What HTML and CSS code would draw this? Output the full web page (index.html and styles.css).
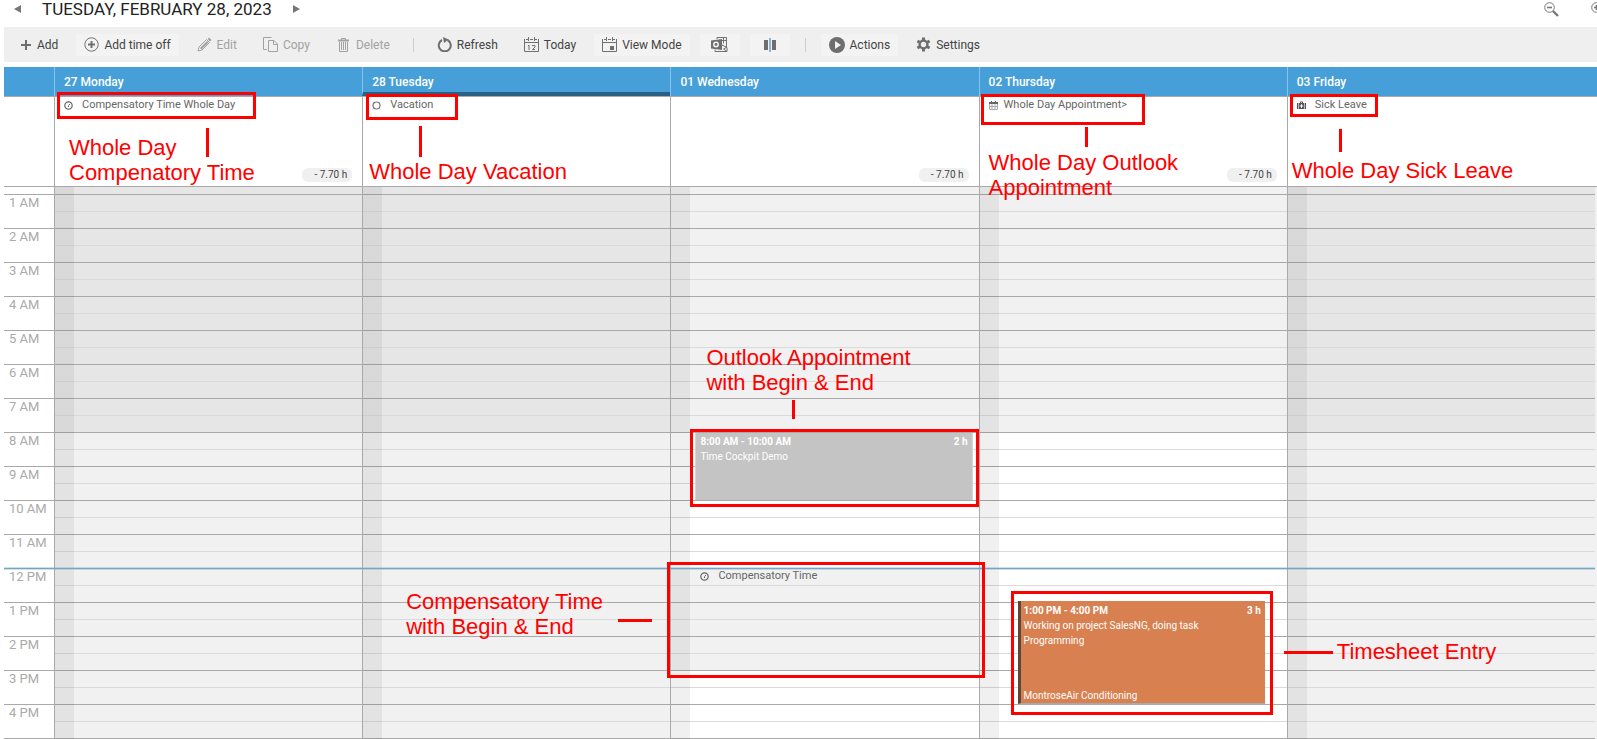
FILE: index.html
```html
<!DOCTYPE html>
<html lang="en">
<head>
<meta charset="utf-8">
<title>Timesheet Calendar</title>
<link rel="stylesheet" href="styles.css">
</head>
<body>
<header class="date-bar">
  <button class="date-arrow" aria-label="Previous week"><svg width="8" height="8" viewBox="0 0 8 8"><path d="M7 0v8L0 4z" fill="#777"/></svg></button>
  <h1 class="date-title">TUESDAY, FEBRUARY 28, 2023</h1>
  <button class="date-arrow" aria-label="Next week"><svg width="8" height="8" viewBox="0 0 8 8"><path d="M1 0v8l7-4z" fill="#777"/></svg></button>
  <div class="zoom-tools">
    <button class="zoom-button" aria-label="Zoom out"><svg width="15" height="15" viewBox="0 0 15 15" fill="none" stroke="#777"><circle cx="5.5" cy="5.5" r="4.8"/><path d="M3 5.500h5" stroke-width="1.600"/><path d="M9 9l5 5" stroke-width="2.400"/></svg></button>
    <button class="zoom-button" aria-label="Zoom in"><svg width="15" height="15" viewBox="0 0 15 15" fill="none" stroke="#777"><circle cx="5.500" cy="5.500" r="4.800"/><path d="M3 5.500h5M5.500 3v5" stroke-width="1.600"/><path d="M9 9l5 5" stroke-width="2.400"/></svg></button>
  </div>
</header>

<nav class="toolbar" aria-label="Calendar actions">
  <button class="tool"><svg width="12" height="12" viewBox="0 0 12 12"><path d="M6 1v10M1 6h10" stroke="#6e6e6e" stroke-width="2"/></svg>Add</button>
  <button class="tool raised"><svg width="15" height="15" viewBox="0 0 15 15" fill="none" stroke="#707070"><circle cx="7.500" cy="7.500" r="6.700"/><path d="M7.500 4v7M4 7.500h7" stroke-width="2"/></svg>Add time off</button>
  <button class="tool" disabled><svg width="15" height="15" viewBox="0 0 15 15"><path d="M1 14l1-4 7.500-7.500 3 3L5 13z" fill="#f0f0f0" stroke="#a2a2a2"/><path d="M3 11L10 4l1.500 1.500-7 7z" fill="#a2a2a2"/><path d="M10.500 2L12 .5l2.500 2.500L13 4.500z" fill="#a2a2a2"/></svg>Edit</button>
  <button class="tool" disabled><svg width="15" height="15" viewBox="0 0 15 15" fill="none" stroke="#a2a2a2"><path d="M4 12.500H.5v-12h8"/><path d="M5.500 3.500h5.500l3.500 3.500v7.500h-9z"/><path d="M10.500 3.500v4h4"/></svg>Copy</button>
  <button class="tool" disabled><svg width="15" height="15" viewBox="0 0 15 15" fill="none" stroke="#a2a2a2"><path d="M2 3.500h11" stroke-width="2"/><path d="M5.500 3V1.500h4V3M3.500 5v9.500h8V5M5.500 5v8M7.500 5v8M9.500 5v8"/></svg>Delete</button>
  <span class="separator"></span>
  <button class="tool"><svg width="15" height="15" viewBox="0 0 15 15"><path d="M10.500 3A6 6 0 1 1 5 3" fill="none" stroke="#6e6e6e" stroke-width="2"/><path d="M6 0l5.500 2.600L7 6z" fill="#6e6e6e"/></svg>Refresh</button>
  <button class="tool"><svg width="15" height="15" viewBox="0 0 15 15" fill="none" stroke="#707070"><path d="M.5 2v12.500h14V2M.5 5.500h14M2 2.500h2M6 2.500h3M11 2.500h2M4.500 0v4M10.500 0v4M5 8v5M4 8.500h1M8 8.500h3V10L8.500 12.500H11"/></svg>Today</button>
  <button class="tool raised"><svg width="15" height="15" viewBox="0 0 15 15" fill="none" stroke="#707070"><path d="M.5 2v12.500h14V2M.5 5.500h14M2 2.500h2M6 2.500h3M11 2.500h2M4.500 0v4M10.500 0v4"/><path d="M8 9h4v4H8z" fill="#6e6e6e" stroke="none"/></svg>View Mode</button>
  <button class="tool raised icon-only" aria-label="Outlook"><svg width="17" height="16" viewBox="0 0 17 16" fill="none" stroke="#707070"><path d="M6 2V.5h9.500V10M10.500 3.500h5M12.500.5v6"/><path d="M0 3.500l11-1.500v11L0 11.500z" fill="#6e6e6e" stroke="none"/><circle cx="5" cy="7.500" r="2.200" stroke="#f3f3f3" stroke-width="1.500"/><path d="M11 8l5 2.500v4H4V12.500M16 10l-3.500 2 3.500 2.500"/></svg></button>
  <button class="tool raised icon-only" aria-label="Columns"><svg width="12" height="14" viewBox="0 0 12 14"><path d="M0 2h4v10H0zM8 2h4v10H8z" fill="#6e6e6e"/><path d="M5 0h2v14H5z" fill="#86b5d9"/></svg></button>
  <span class="separator"></span>
  <button class="tool raised"><svg width="16" height="16" viewBox="0 0 16 16"><circle cx="8" cy="8" r="8" fill="#6e6e6e"/><path d="M6 4l6 4-6 4z" fill="#f3f3f3"/></svg>Actions</button>
  <button class="tool"><svg width="15" height="15" viewBox="0 0 15 15"><g stroke="#6e6e6e" fill="none"><circle cx="7.500" cy="7.500" r="3.900" stroke-width="2.400"/><path d="M7.500.5v2.500M7.500 12v2.500M1.400 4l2.300 1.300M11.300 9.700l2.300 1.300M1.400 11l2.300-1.300M11.300 5.300L13.600 4" stroke-width="3"/></g></svg>Settings</button>
</nav>

<main class="calendar">
  <div class="row heads">
    <div class="gutter"></div>
    <h2 class="head">27 Monday</h2>
    <h2 class="head today">28 Tuesday</h2>
    <h2 class="head">01 Wednesday</h2>
    <h2 class="head">02 Thursday</h2>
    <h2 class="head">03 Friday</h2>
  </div>

  <div class="row all-day">
    <div class="gutter"></div>
    <div class="cell">
      <p class="entry"><svg width="9" height="9" viewBox="0 0 9 9" fill="none" stroke="#666"><circle cx="4.500" cy="4.500" r="3.700" stroke-width="1.200"/><path d="M6 3L4.500 4.500V6"/></svg>Compensatory Time Whole Day</p>
      <span class="balance">- 7.70 h</span>
    </div>
    <div class="cell">
      <p class="entry"><svg width="9" height="9" viewBox="0 0 9 9"><circle cx="4.500" cy="4.500" r="3.500" fill="none" stroke="#777" stroke-width="1.200"/><path d="M.8.8l1 1M8.200.8l-1 1M.8 8.200l1-1M8.200 8.200l-1-1" stroke="#aaa"/></svg>Vacation</p>
    </div>
    <div class="cell">
      <span class="balance">- 7.70 h</span>
    </div>
    <div class="cell">
      <p class="entry near"><svg width="9" height="9" viewBox="0 0 9 9"><path d="M0 1h9v2H0zM2 0h1v2H2zM6 0h1v2H6z" fill="#666"/><path d="M.5 3v5.500h8V3M3 3v5.500M6 3v5.500M.5 5.500h8" stroke="#aaa" fill="none"/></svg>Whole Day Appointment&gt;</p>
      <span class="balance">- 7.70 h</span>
    </div>
    <div class="cell">
      <p class="entry"><svg width="9" height="9" viewBox="0 0 9 9"><path d="M0 2h1v6H0zM8 2h1v6H8zM1.600 2H3V.5h3V2h1.400v6H1.600zM4 1.300V2h1v-.7z" fill="#555"/><path d="M4.500 3.200v3.600M2.700 5h3.600" stroke="#fff"/></svg>Sick Leave</p>
    </div>
  </div>

  <div class="row hours">
    <ol class="gutter hour-list">
      <li>1 AM</li><li>2 AM</li><li>3 AM</li><li>4 AM</li><li>5 AM</li><li>6 AM</li><li>7 AM</li><li>8 AM</li>
      <li>9 AM</li><li>10 AM</li><li>11 AM</li><li>12 PM</li><li>1 PM</li><li>2 PM</li><li>3 PM</li><li>4 PM</li>
    </ol>
    <section class="day off" aria-label="Monday"></section>
    <section class="day off" aria-label="Tuesday"></section>
    <section class="day absent" aria-label="Wednesday">
      <article class="event appointment">
        <p class="event-time"><span>8:00 AM - 10:00 AM</span><span>2 h</span></p>
        <p>Time Cockpit Demo</p>
      </article>
      <p class="entry timed"><svg width="9" height="9" viewBox="0 0 9 9" fill="none" stroke="#666"><circle cx="4.500" cy="4.500" r="3.700" stroke-width="1.200"/><path d="M6 3L4.500 4.500V6"/></svg>Compensatory Time</p>
    </section>
    <section class="day" aria-label="Thursday">
      <article class="event timesheet">
        <p class="event-time"><span>1:00 PM - 4:00 PM</span><span>3 h</span></p>
        <p>Working on project SalesNG, doing task<br>Programming</p>
        <p class="customer">MontroseAir Conditioning</p>
      </article>
    </section>
    <section class="day off" aria-label="Friday"></section>
    <div class="noon"></div>
  </div>

  <div class="notes">
    <div></div>
    <div class="lane">
      <div class="frame frame-comp-day"></div><div class="stem stem-comp-day"></div>
      <p class="note note-comp-day">Whole Day<br>Compenatory Time</p>
    </div>
    <div class="lane">
      <div class="frame frame-vacation"></div><div class="stem stem-vacation"></div>
      <p class="note note-vacation">Whole Day Vacation</p>
      <p class="note note-comp">Compensatory Time<br>with Begin &amp; End</p><div class="stem stem-comp"></div>
    </div>
    <div class="lane">
      <p class="note note-outlook">Outlook Appointment<br>with Begin &amp; End</p><div class="stem stem-outlook"></div>
      <div class="frame frame-outlook"></div>
      <div class="frame frame-comp"></div>
    </div>
    <div class="lane">
      <div class="frame frame-outlook-day"></div><div class="stem stem-outlook-day"></div>
      <p class="note note-outlook-day">Whole Day Outlook<br>Appointment</p>
      <div class="frame frame-timesheet"></div>
    </div>
    <div class="lane">
      <div class="frame frame-sick"></div><div class="stem stem-sick"></div>
      <p class="note note-sick">Whole Day Sick Leave</p>
      <div class="stem stem-timesheet"></div><p class="note note-timesheet">Timesheet Entry</p>
    </div>
  </div>
</main>
</body>
</html>
```
FILE: styles.css
```css
* { box-sizing: border-box; }
body {
  margin: 0;
  font-family: Roboto, "Liberation Sans", sans-serif;
  font-size: 12px;
  color: #444;
  background: #fff;
  overflow: hidden;
}
h1, h2, p, ol { margin: 0; padding: 0; }
ol { list-style: none; }
button {
  border: 0;
  padding: 0;
  background: none;
  font: inherit;
  color: inherit;
}
svg { display: block; flex: none; }

/* Date bar */
.date-bar {
  display: flex;
  align-items: flex-start;
  height: 27px;
  padding-left: 14px;
}
.date-arrow { padding-top: 5px; }
.date-title {
  margin: 0 20px;
  font-size: 17px;
  line-height: 18px;
  font-weight: 400;
  color: #222;
}
.zoom-tools {
  display: flex;
  gap: 32px;
  margin-left: auto;
  margin-right: -9px;
  padding-top: 2px;
}

/* Toolbar */
.toolbar {
  display: flex;
  align-items: center;
  gap: 10px;
  height: 35px;
  margin-left: 4px;
  padding: 0 8px;
  background: #efefef;
}
.tool {
  display: flex;
  align-items: center;
  gap: 5px;
  height: 22px;
  padding: 0 8px;
  white-space: nowrap;
}
.tool:disabled { color: #a2a2a2; }
.raised { background: #f3f3f3; }
.icon-only { width: 40px; justify-content: center; }
.separator {
  width: 1px;
  height: 14px;
  margin: 0 5px;
  background: #ccc;
}

/* Calendar grid */
.calendar {
  position: relative;
  margin: 5px 0 0 4px;
}
.row, .notes {
  display: grid;
  grid-template-columns: 50px repeat(5, minmax(0, 1fr));
  padding-right: 2px;
}
.heads { background: #479fd9; }
.heads, .all-day { border-bottom: 1px solid #a9a9a9; }
.head {
  height: 29px;
  padding: 2px 9px 0;
  border-left: 1px solid #84c4ee;
  font-size: 12px;
  line-height: 27px;
  font-weight: 500;
  color: #fff;
}
.today { border-bottom: 4px solid #2a5f86; }
.cell {
  display: flex;
  flex-direction: column;
  align-items: flex-start;
  height: 89px;
  padding: 0 10px 4px 9px;
  border-left: 1px solid #a9a9a9;
}
.entry {
  display: flex;
  align-items: center;
  gap: 9px;
  font-size: 11px;
  line-height: 16px;
  color: #666;
}
.near { gap: 6px; }
.balance {
  width: 50px;
  margin: auto 0 0 auto;
  padding-right: 5px;
  border-radius: 6px;
  background: #f0f0f0;
  font-size: 10px;
  line-height: 14px;
  text-align: right;
}

/* Hour area */
.hours {
  position: relative;
  background: linear-gradient(#f1f1f1, #f1f1f1) right / 2px 100% no-repeat;
}
.hour-list { padding-top: 7px; border-bottom: 1px solid #a9a9a9; }
.hour-list li {
  height: 34px;
  padding: 0 5px;
  border-top: 1px solid #a9a9a9;
  font-size: 13px;
  line-height: 15px;
  color: #aaa;
  white-space: nowrap;
}
.day {
  --night: #f1f1f1;
  --work: #fff;
  position: relative;
  border-left: 1px solid #a9a9a9;
  background:
    linear-gradient(rgba(0, 0, 0, .06), rgba(0, 0, 0, .06)) 0 0 / 19px 100% no-repeat,
    linear-gradient(#a9a9a9 1px, transparent 1px) 0 7px / 100% 34px,
    linear-gradient(#dadada 1px, transparent 1px) 0 24px / 100% 34px,
    linear-gradient(var(--night) 245px, var(--work) 245px);
  background-clip: padding-box;
}
.day.off { --night: #e6e6e6; --work: #f1f1f1; }
.day.absent {
  background:
    linear-gradient(rgba(0, 0, 0, .06), rgba(0, 0, 0, .06)) 0 0 / 19px 100% no-repeat,
    linear-gradient(#a9a9a9 1px, transparent 1px) 0 7px / 100% 34px,
    linear-gradient(#dadada 1px, transparent 1px) 0 24px / 100% 34px,
    linear-gradient(#f1f1f1 245px, #fff 245px, #fff 381px, #f1f1f1 381px, #f1f1f1 483px, #fff 483px);
}
.noon {
  position: absolute;
  top: 380px;
  left: 0;
  right: 2px;
  height: 3px;
  border: solid rgba(120, 180, 215, .4);
  border-width: 1px 0;
  background: #7ba3be;
  background-clip: padding-box;
}
.timed { position: absolute; top: 381px; left: 29px; }
.event {
  position: absolute;
  display: flex;
  flex-direction: column;
  font-size: 10px;
  line-height: 15px;
  color: #fff;
}
.event-time {
  display: flex;
  justify-content: space-between;
  font-weight: 700;
}
.appointment {
  top: 246px;
  left: 24px;
  right: 6px;
  height: 67px;
  padding: 1px 4px;
  border: solid #d6d6d6;
  border-width: 0 1px;
  background: #c4c4c4;
}
.timesheet {
  top: 414px;
  left: 38px;
  right: 22px;
  height: 103px;
  padding: 2px 4px 0 3px;
  border-left: 3px solid #5c4638;
  border-bottom: 1px solid #a9a9a9;
  background: #d88050;
}
.customer { margin-top: auto; }

/* Annotations drawn over the calendar */
.notes {
  position: absolute;
  inset: 0;
  pointer-events: none;
}
.lane { position: relative; }
.frame, .stem, .note { position: absolute; }
.frame { border: 3px solid #f00; }
.stem { width: 3px; background: #f00; }
.note {
  font-family: "Liberation Sans", sans-serif;
  font-size: 22px;
  line-height: 25px;
  color: #f00;
  white-space: nowrap;
}
.frame-comp-day { top: 25px; left: 3px; width: 199px; height: 27px; }
.stem-comp-day { top: 61px; left: 152px; height: 29px; }
.note-comp-day { top: 68px; left: 15px; }
.frame-vacation { top: 27px; left: 4px; width: 92px; height: 26px; }
.stem-vacation { top: 59px; left: 57px; height: 31px; }
.note-vacation { top: 92px; left: 7px; }
.note-comp { top: 522px; left: 44px; }
.stem-comp { top: 552px; left: 256px; width: 34px; height: 3px; }
.note-outlook { top: 278px; left: 36px; }
.stem-outlook { top: 333px; left: 122px; height: 19px; }
.frame-outlook { top: 362px; left: 20px; right: 0; height: 78px; }
.frame-comp { top: 495px; left: -3px; right: -6px; height: 116px; }
.frame-outlook-day { top: 27px; left: 2px; width: 164px; height: 31px; }
.stem-outlook-day { top: 60px; left: 106px; height: 20px; }
.note-outlook-day { top: 83px; left: 10px; }
.frame-timesheet { top: 524px; left: 32px; right: 14px; height: 124px; }
.frame-sick { top: 27px; left: 3px; width: 88px; height: 23px; }
.stem-sick { top: 62px; left: 52px; height: 23px; }
.note-sick { top: 91px; left: 5px; }
.stem-timesheet { top: 584px; left: -3px; width: 49px; height: 3px; }
.note-timesheet { top: 572px; left: 50px; }
```
